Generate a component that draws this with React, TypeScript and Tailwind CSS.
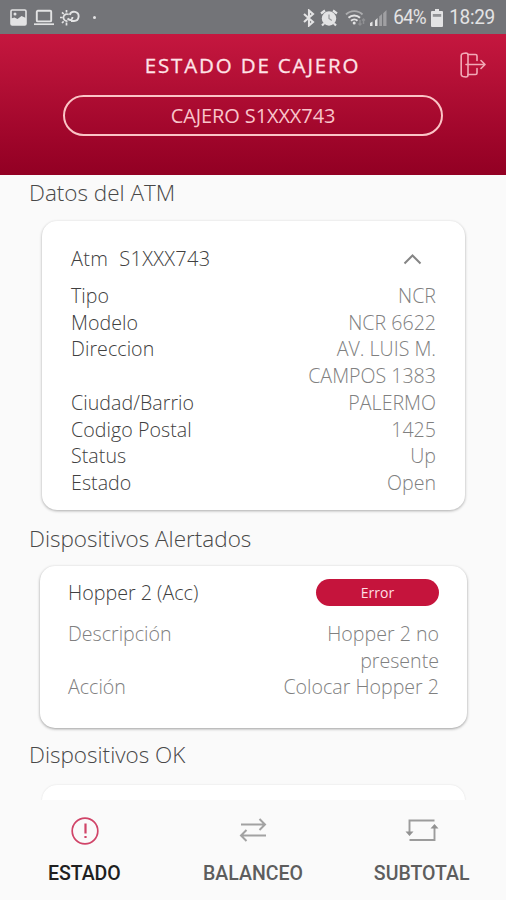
import React from 'react';

const atmRows = [
    {label: 'Tipo', value: 'NCR'},
    {label: 'Modelo', value: 'NCR 6622'},
    {label: 'Direccion', value: 'AV. LUIS M. CAMPOS 1383'},
    {label: 'Ciudad/Barrio', value: 'PALERMO'},
    {label: 'Codigo Postal', value: '1425'},
    {label: 'Status', value: 'Up'},
    {label: 'Estado', value: 'Open'},
]

const alertRows = [
    {label: 'Descripción', value: 'Hopper 2 no presente'},
    {label: 'Acción', value: 'Colocar Hopper 2'},
]

const StatusBar = () => (
    <div className="flex h-[34px] shrink-0 items-center justify-between bg-[#737478] pl-[10px] pr-[11px] pt-px text-[#e3e3e4]">
        <div className="flex items-center">
            <svg className="h-[17px] w-[17px]" viewBox="0 0 17 17">
                <rect x="1" y="1" width="15" height="15" rx="1.2" fill="none" stroke="currentColor" strokeWidth="1.6"/>
                <path d="M1 9.5l3.5-1 3 1.5 4-3L16 9v7H1z" fill="currentColor"/>
                <circle cx="5" cy="5" r="1.5" fill="currentColor"/>
            </svg>
            <svg className="ml-[7px] h-[17px] w-[20px]" viewBox="0 0 20 17">
                <rect x="2.8" y="1.8" width="14.4" height="10.6" rx="1" fill="none" stroke="currentColor" strokeWidth="1.9"/>
                <path d="M0 15.2h20" stroke="currentColor" strokeWidth="1.7"/>
            </svg>
            <svg className="ml-[6px] h-[17px] w-[20px]" viewBox="0 0 20 17" fill="none" stroke="currentColor" strokeWidth="1.7">
                <path d="M7.500 12a3.500 3.500 0 1 1 1.200-6.500M6.500 1v2.500M2 3.300l1.700 1.700M0 8.500h2.500M2 14l1.700-1.700M6.500 13.500V16.500"/>
                <path d="M11 12h3a4.600 4.600 0 1 0-4.300-6.200M7.500 9.500c2.500 2.500 5 1.500 5-1.500" strokeWidth="1.900"/>
            </svg>
            <span className="ml-[13px] h-[3px] w-[3px] rounded-full bg-current"/>
        </div>
        <div className="flex items-center">
            <svg className="h-[18px] w-[12px]" viewBox="0 0 12 18" fill="none" stroke="currentColor" strokeWidth="2.100">
                <path d="M1 5l9 8-4 3.500V1.500L10 5l-9 8"/>
            </svg>
            <svg className="ml-[5px] h-[18px] w-[18px]" viewBox="0 0 18 18">
                <circle cx="9" cy="9.500" r="7.200" fill="currentColor"/>
                <path d="M1 4.500l4-3M17 4.500l-4-3M4 14.500l-2 2M14 14.500l2 2" stroke="currentColor" strokeWidth="2.200"/>
                <path d="M9 5.500v4l2.800 2" fill="none" stroke="#9a9b9d" strokeWidth="1.300"/>
            </svg>
            <svg className="ml-[7px] h-[18px] w-[21px]" viewBox="0 0 21 18" fill="none" stroke="currentColor" strokeWidth="1.900">
                <path d="M1 5.500c4.500-4.500 12-4.500 16.500 0" opacity=".5"/>
                <path d="M3.500 8.700c3.200-3 8.300-3 11.500 0M6 11.800c1.900-1.700 4.700-1.700 6.500 0"/>
                <circle cx="9.200" cy="14" r="1.500" fill="currentColor" stroke="none"/>
                <path d="M15 11v5m-1.500-1.500L15 16l1.500-1.500M18.500 15v-5M17 11.500l1.500-1.500 1.500 1.500" strokeWidth="1.500" opacity=".25"/>
            </svg>
            <svg className="ml-[4px] h-[18px] w-[17px]" viewBox="0 0 17 18" fill="currentColor">
                <path d="M0 17v-3l2.500-1.500V17zM5 17v-5.500L7.500 9v8z"/>
                <path d="M9.200 17V7.500L12 5v12zM13.200 17V4.200L16.500 1v16z" opacity=".4"/>
            </svg>
            <span className="ml-[6px] inline-block w-[33px] origin-left scale-y-105 whitespace-nowrap font-['Roboto'] text-[19px] leading-[22px] tracking-[-0.900px]">64%</span>
            <svg className="ml-[5px] h-[18px] w-[12px]" viewBox="0 0 12 18">
                <path d="M4 0h4v2h3q1 0 1 1v14q0 1-1 1H1q-1 0-1-1V3q0-1 1-1h3z" fill="currentColor"/>
                <path d="M1.800 5h8.400v2.800H1.800z" fill="#929396"/>
            </svg>
            <span className="ml-[6px] inline-block scale-y-105 whitespace-nowrap font-['Roboto'] text-[19px] leading-[22px] tracking-[-0.300px]">18:29</span>
        </div>
    </div>
)

const ExitIcon = () => (
    <svg className="h-[26px] w-[26px]" viewBox="0 0 26 26" fill="none" stroke="#f2a9b6" strokeWidth="1.600" strokeLinecap="round" strokeLinejoin="round">
        <path d="M3 1.500L6 1q2 0 2 2v20q0 2-2 2l-3-.5q-1.800-.5-1.800-2V3.500Q1.200 2 3 1.500z"/>
        <path d="M8 2.500h7.500q1.500 0 1.500 1.500v4.500M8 22.500h7.500q1.500 0 1.500-1.500v-4.500"/>
        <path d="M6 12.500h18.500M21 8.500l4 4-4 4"/>
    </svg>
)

const Header = () => (
    <div className="flex h-[141px] shrink-0 flex-col items-center bg-linear-to-b from-[#c5173f] to-[#920023]">
        <div className="flex w-full items-center pt-[17px]">
            <h1 className="flex-1 pl-[45px] text-center text-[20.500px] leading-[28px] tracking-[1.850px] text-[#ffe3e7] [-webkit-text-stroke:0.300px_#ffe3e7]">ESTADO DE CAJERO</h1>
            <button className="mr-[20px]"><ExitIcon/></button>
        </div>
        <div className="mt-[16px] flex h-[41px] w-[380px] items-center justify-center rounded-full border-2 border-[#fbc4c6] pt-px text-[20px] tracking-[-0.100px] text-[#f9c4ca]">
            CAJERO S1XXX743
        </div>
    </div>
)

const SectionTitle = ({children}: {children: React.ReactNode}) => (
    <h2 className="pl-[29px] text-[22.500px] font-light leading-[30px] text-[#484848]">{children}</h2>
)

const Rows = ({rows, labelClass}: {rows: {label: string, value: string}[], labelClass: string}) => (
    <dl className="text-[19.600px] font-light leading-[26.700px]">
        {rows.map(({label, value}) => (
            <div key={label} className="flex justify-between">
                <dt className={labelClass}>{label}</dt>
                <dd className="w-[160px] text-right text-[#808080]">{value}</dd>
            </div>
        ))}
    </dl>
)

const BottomNav = () => (
    <nav className="grid h-[100px] shrink-0 grid-cols-3 bg-[#fafafa] pt-[16px] font-['Roboto'] text-[19.500px] font-medium text-[#5d5d5d]">
        <div className="flex flex-col items-center">
            <svg className="ml-px h-[30px] w-[30px]" viewBox="0 0 30 30" fill="none" stroke="#d04468">
                <circle cx="15" cy="15" r="12.800" strokeWidth="1.700"/>
                <path d="M15.500 7.500v10M15.500 20v2" strokeWidth="2.200"/>
            </svg>
            <span className="mt-[14px] leading-[28px] text-[#202020]">ESTADO</span>
        </div>
        <div className="flex flex-col items-center">
            <svg className="h-[30px] w-[30px]" viewBox="0 0 30 30" fill="none" stroke="#a2a2a2" strokeWidth="2">
                <path d="M3 8.500h24M21.500 3l5.500 5.500-5.500 5.500M28 19.500H3M8.500 14L3 19.500 8.500 25"/>
            </svg>
            <span className="mt-[14px] leading-[28px]">BALANCEO</span>
        </div>
        <div className="flex flex-col items-center">
            <svg className="h-[30px] w-[34px]" viewBox="0 0 34 30" fill="none" stroke="#9c9c9c" strokeWidth="1.900">
                <path d="M29.500 4.500H4.500v13M4.500 24H29.500V11"/>
                <path d="M.5 15.500h8L4.500 20zM25.500 12.500h8L29.500 8z" fill="#929292" stroke="none"/>
            </svg>
            <span className="mt-[14px] leading-[28px]">SUBTOTAL</span>
        </div>
    </nav>
)

const App = () => {
    return (
        <div className="flex h-[900px] w-[506px] flex-col overflow-hidden bg-[#fafafa] font-['Open_Sans','Noto_Sans',sans-serif]">
            <StatusBar/>
            <Header/>
            <main className="min-h-0 flex-1 overflow-hidden pt-[3px]">
                <SectionTitle>Datos del ATM</SectionTitle>
                <section className="ml-[42px] mt-[13px] h-[289px] w-[423px] rounded-[15px] bg-white px-[29px] pt-[24px] shadow-[0_1px_3px_rgba(0,0,0,0.320)]">
                    <div className="mb-[11px] flex h-[27px] items-center justify-between pr-[14px] text-[20px] font-light tracking-[0.300px] text-[#404040]">
                        <span className="whitespace-pre">Atm  S1XXX743</span>
                        <svg className="h-[12px] w-[19px]" viewBox="0 0 19 12" fill="none" stroke="#858585" strokeWidth="2">
                            <path d="M1.500 10.500l8-8 8 8"/>
                        </svg>
                    </div>
                    <Rows rows={atmRows} labelClass="tracking-[0.060px] text-[#404040]"/>
                </section>
                <div className="mt-[14px]"><SectionTitle>Dispositivos Alertados</SectionTitle></div>
                <section className="ml-[40px] mt-[12px] h-[162px] w-[427px] rounded-[15px] bg-white px-[28px] pt-[13px] shadow-[0_1px_3px_rgba(0,0,0,0.380)]">
                    <div className="mb-[14px] flex h-[28px] items-center justify-between text-[19.700px] font-light text-[#404040]">
                        <span>Hopper 2 (Acc)</span>
                        <span className="-mt-px flex h-[27px] w-[123px] items-center justify-center rounded-full bg-[#c5143c] text-[14px] font-normal text-[#ffdfe4]">Error</span>
                    </div>
                    <Rows rows={alertRows} labelClass="text-[#808080]"/>
                </section>
                <div className="mt-[12px]"><SectionTitle>Dispositivos OK</SectionTitle></div>
                <section className="ml-[42px] mt-[15px] h-[100px] w-[423px] rounded-[15px] bg-white shadow-[0_0_2px_rgba(0,0,0,0.120)]"/>
            </main>
            <BottomNav/>
        </div>
    )
}

export default App;
